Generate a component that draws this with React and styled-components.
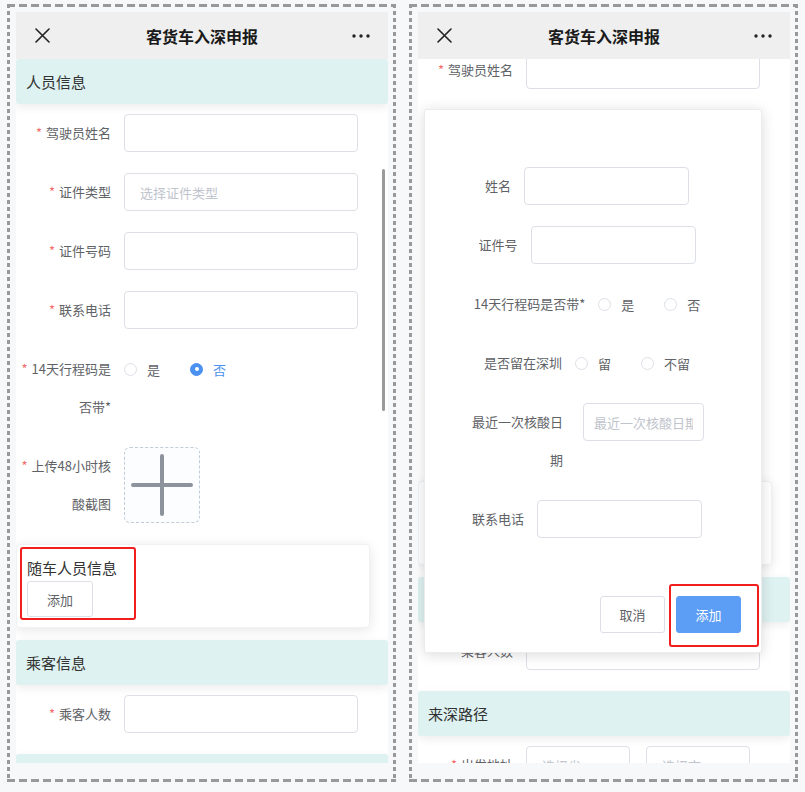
import styled, { createGlobalStyle } from 'styled-components';
import { useLayoutEffect, useRef } from 'react';

const GlobalStyle = createGlobalStyle`
  body {
    margin: 0;
    background: #f7f8fa;
    font-family: "Noto Sans CJK SC", "Noto Sans", sans-serif;
    color: #333;
  }
`;

const Page = styled.div`
  display: flex;
  gap: 13px;
  padding: 4px 0 0 7px;
`;

// 点线边框 (dashed frame around each screenshot)
const Frame = styled.div`
  padding: 8px 8px 19px 9px;
  background:
    repeating-linear-gradient(90deg, #999 0 8px, transparent 8px 12px) top / 100% 3px no-repeat,
    repeating-linear-gradient(90deg, #999 0 8px, transparent 8px 12px) bottom / 100% 3px no-repeat,
    repeating-linear-gradient(180deg, #999 0 4px, transparent 4px 7px) left / 3px 100% no-repeat,
    repeating-linear-gradient(180deg, #999 0 4px, transparent 4px 7px) right / 3px 100% no-repeat;
`;

const Phone = styled.div`
  position: relative;
  width: 372px;
  height: 751px;
  background: #fff;
  display: flex;
  flex-direction: column;
  overflow: hidden;
`;

const NavBar = styled.div`
  height: 47px;
  flex-shrink: 0;
  background: #efefef;
  display: grid;
  grid-template-columns: 60px 1fr 60px;
  align-items: center;
  position: relative;
  z-index: 3;
`;

const NavTitle = styled.div`
  text-align: center;
  font-size: 16px;
  font-weight: 700;
  color: #1a1a1a;
`;

const NavIcon = styled.div`
  display: flex;
  justify-content: ${p => (p.$right ? 'flex-end' : 'flex-start')};
  padding: ${p => (p.$right ? '0 18px 0 0' : '0 0 0 19px')};
`;

const Body = styled.div`
  flex: 1;
  overflow-y: auto;
  scrollbar-width: none;
  padding-bottom: 80px;

  &::-webkit-scrollbar {
    display: none;
  }
`;

const ScrollThumb = styled.div`
  position: absolute;
  right: 3px;
  top: 157px;
  width: 3px;
  height: 242px;
  border-radius: 2px;
  background: #9a9a9a;
  z-index: 2;
`;

const SectionHead = styled.div`
  height: 45px;
  display: flex;
  align-items: center;
  padding-left: 10px;
  margin-bottom: 10px;
  background: #def2f1;
  border-radius: 3px;
  box-shadow: 0 3px 10px rgba(0, 0, 0, 0.08);
  font-size: 15px;
  color: #333;
`;

const FormItem = styled.div`
  display: flex;
  align-items: flex-start;
  padding-right: 30px;
  margin-bottom: 21px;
`;

const Label = styled.div`
  width: 108px;
  flex-shrink: 0;
  box-sizing: border-box;
  padding-right: 13px;
  text-align: right;
  line-height: 38px;
  font-size: 13px;
  color: #606266;

  ${p => p.$required && `
    &::before {
      content: '*';
      color: #f56c6c;
      margin-right: 4px;
    }
  `}
`;

const TextInput = styled.input`
  flex: ${p => (p.$w ? 'none' : '1')};
  width: ${p => (p.$w ? `${p.$w}px` : 'auto')};
  min-width: 0;
  height: 38px;
  box-sizing: border-box;
  border: 1px solid #dcdfe6;
  border-radius: 4px;
  padding: 0 ${p => p.$pad ?? 15}px;
  font-family: inherit;
  font-size: 13px;
  color: #606266;
  background: #fff;
  outline: none;

  &::placeholder {
    color: #c0c4cc;
  }
`;

const SelectPair = styled.div`
  display: flex;
  gap: 16px;
`;

const RadioGroup = styled.div`
  display: flex;
  align-items: center;
  height: 38px;
  gap: 30px;
`;

const RadioItem = styled.label`
  display: inline-flex;
  align-items: center;
  gap: 10px;
  font-size: 13px;
  color: ${p => (p.$checked ? '#4b91f1' : '#606266')};
`;

const RadioDot = styled.span`
  width: 13px;
  height: 13px;
  box-sizing: border-box;
  border-radius: 50%;
  border: 1px solid ${p => (p.$checked ? '#4b91f1' : '#dcdfe6')};
  background: ${p => (p.$checked ? '#4b91f1' : '#fff')};
  display: flex;
  align-items: center;
  justify-content: center;

  &::after {
    content: '';
    width: 4px;
    height: 4px;
    border-radius: 50%;
    background: #fff;
  }
`;

const UploadBox = styled.div`
  width: 76px;
  height: 76px;
  box-sizing: border-box;
  border: 1px dashed #c0ccda;
  border-radius: 6px;
  background: #fbfdff;
  display: flex;
  align-items: center;
  justify-content: center;
`;

const Card = styled.div`
  position: relative;
  margin: 0 18px 12px 0;
  padding: 10px;
  border: 1px solid #f0f1f4;
  border-radius: 4px;
  background: #fff;
  box-shadow: 0 2px 12px rgba(0, 0, 0, 0.1);
`;

const CardTitle = styled.div`
  font-size: 15px;
  line-height: 26px;
  color: #333;
`;

const Button = styled.button`
  width: ${p => p.$w || 66}px;
  height: ${p => p.$h || 36}px;
  box-sizing: border-box;
  border: 1px solid ${p => (p.$primary ? '#5c9df6' : '#dcdfe6')};
  border-radius: 3px;
  background: ${p => (p.$primary ? '#5c9df6' : '#fff')};
  color: ${p => (p.$primary ? '#fff' : '#606266')};
  font-family: inherit;
  font-size: 13px;
  padding: 0;
`;

// 标注用红框
const Mark = styled.div`
  position: absolute;
  border: 2px solid #f21d1d;
  border-radius: 3px;
  pointer-events: none;
`;

const Dialog = styled.div`
  position: absolute;
  left: 6px;
  top: 97px;
  width: 338px;
  box-sizing: border-box;
  padding: 57px 12px 19px 0;
  background: #fff;
  border: 1px solid #ececec;
  border-radius: 2px;
  box-shadow: 0 2px 14px rgba(0, 0, 0, 0.14);
  z-index: 2;
`;

const DialogRow = styled.div`
  display: flex;
  justify-content: center;
  align-items: flex-start;
  gap: ${p => p.$gap || 13}px;
  margin-bottom: 21px;
`;

const DialogLabel = styled.div`
  width: ${p => (p.$w ? `${p.$w}px` : 'auto')};
  text-align: right;
  line-height: 38px;
  font-size: 13px;
  color: #606266;
`;

const DialogFooter = styled.div`
  display: flex;
  justify-content: flex-end;
  gap: 11px;
  margin-top: 58px;
  padding-right: 8px;
`;

const MarkWrap = styled.div`
  position: relative;
`;

const CloseIcon = () => (
  <svg width="15" height="15" viewBox="0 0 15 15">
    <path d="M1 1L14 14M14 1L1 14" stroke="#222" strokeWidth="1.6" strokeLinecap="round" />
  </svg>
);

const MoreIcon = () => (
  <svg width="18" height="4" viewBox="0 0 18 4">
    <circle cx="2" cy="2" r="1.7" fill="#222" />
    <circle cx="9" cy="2" r="1.7" fill="#222" />
    <circle cx="16" cy="2" r="1.7" fill="#222" />
  </svg>
);

const PlusIcon = () => (
  <svg width="62" height="62" viewBox="0 0 62 62">
    <path d="M31 2V60M2 31H60" stroke="#8c939d" strokeWidth="4" strokeLinecap="round" />
  </svg>
);

const Radios = ({ options, checked }) => (
  <RadioGroup>
    {options.map(o => (
      <RadioItem key={o} $checked={o === checked}>
        <RadioDot $checked={o === checked} />
        {o}
      </RadioItem>
    ))}
  </RadioGroup>
);

const FormContent = ({ markCard }) => (
  <>
    <SectionHead>人员信息</SectionHead>
    <FormItem>
      <Label $required>驾驶员姓名</Label>
      <TextInput readOnly />
    </FormItem>
    <FormItem>
      <Label $required>证件类型</Label>
      <TextInput readOnly placeholder="选择证件类型" />
    </FormItem>
    <FormItem>
      <Label $required>证件号码</Label>
      <TextInput readOnly />
    </FormItem>
    <FormItem>
      <Label $required>联系电话</Label>
      <TextInput readOnly />
    </FormItem>
    <FormItem>
      <Label $required>14天行程码是否带*</Label>
      <Radios options={['是', '否']} checked="否" />
    </FormItem>
    <FormItem>
      <Label $required>上传48小时核酸截图</Label>
      <UploadBox>
        <PlusIcon />
      </UploadBox>
    </FormItem>

    <Card>
      <CardTitle>随车人员信息</CardTitle>
      <Button>添加</Button>
      {markCard && <Mark style={{ left: 3, top: 2, width: 112, height: 69 }} />}
    </Card>

    <SectionHead>乘客信息</SectionHead>
    <FormItem>
      <Label $required>乘客人数</Label>
      <TextInput readOnly />
    </FormItem>

    <SectionHead>来深路径</SectionHead>
    <FormItem>
      <Label $required>出发地址</Label>
      <SelectPair>
        <TextInput readOnly $w={104} placeholder="选择省" />
        <TextInput readOnly $w={104} placeholder="选择市" />
      </SelectPair>
    </FormItem>
    <FormItem>
      <Label $required>途经地址</Label>
      <TextInput readOnly />
    </FormItem>
  </>
);

const CompanionDialog = () => (
  <Dialog>
    <DialogRow>
      <DialogLabel>姓名</DialogLabel>
      <TextInput readOnly $w={165} />
    </DialogRow>
    <DialogRow>
      <DialogLabel>证件号</DialogLabel>
      <TextInput readOnly $w={165} />
    </DialogRow>
    <DialogRow>
      <DialogLabel>14天行程码是否带*</DialogLabel>
      <Radios options={['是', '否']} />
    </DialogRow>
    <DialogRow>
      <DialogLabel>是否留在深圳</DialogLabel>
      <Radios options={['留', '不留']} />
    </DialogRow>
    <DialogRow $gap={20}>
      <DialogLabel $w={93}>最近一次核酸日期</DialogLabel>
      <TextInput readOnly $w={121} $pad={10} placeholder="最近一次核酸日期" />
    </DialogRow>
    <DialogRow>
      <DialogLabel>联系电话</DialogLabel>
      <TextInput readOnly $w={165} />
    </DialogRow>
    <DialogFooter>
      <Button $w={65} $h={37}>取消</Button>
      <MarkWrap>
        <Button $primary $w={65} $h={37}>添加</Button>
        <Mark style={{ left: -7, top: -12, width: 86, height: 59 }} />
      </MarkWrap>
    </DialogFooter>
  </Dialog>
);

const PhoneScreen = ({ scroll = 0, dialog, scrollbar, markCard }) => {
  const bodyRef = useRef(null);

  useLayoutEffect(() => {
    if (bodyRef.current) bodyRef.current.scrollTop = scroll;
  }, [scroll]);

  return (
    <Frame>
      <Phone>
        <NavBar>
          <NavIcon><CloseIcon /></NavIcon>
          <NavTitle>客货车入深申报</NavTitle>
          <NavIcon $right><MoreIcon /></NavIcon>
        </NavBar>
        <Body ref={bodyRef}>
          <FormContent markCard={markCard} />
        </Body>
        {scrollbar && <ScrollThumb />}
        {dialog && <CompanionDialog />}
      </Phone>
    </Frame>
  );
};

const App = () => (
  <>
    <GlobalStyle />
    <Page>
      <PhoneScreen scrollbar markCard />
      <PhoneScreen scroll={63} dialog />
    </Page>
  </>
);

export default App;
